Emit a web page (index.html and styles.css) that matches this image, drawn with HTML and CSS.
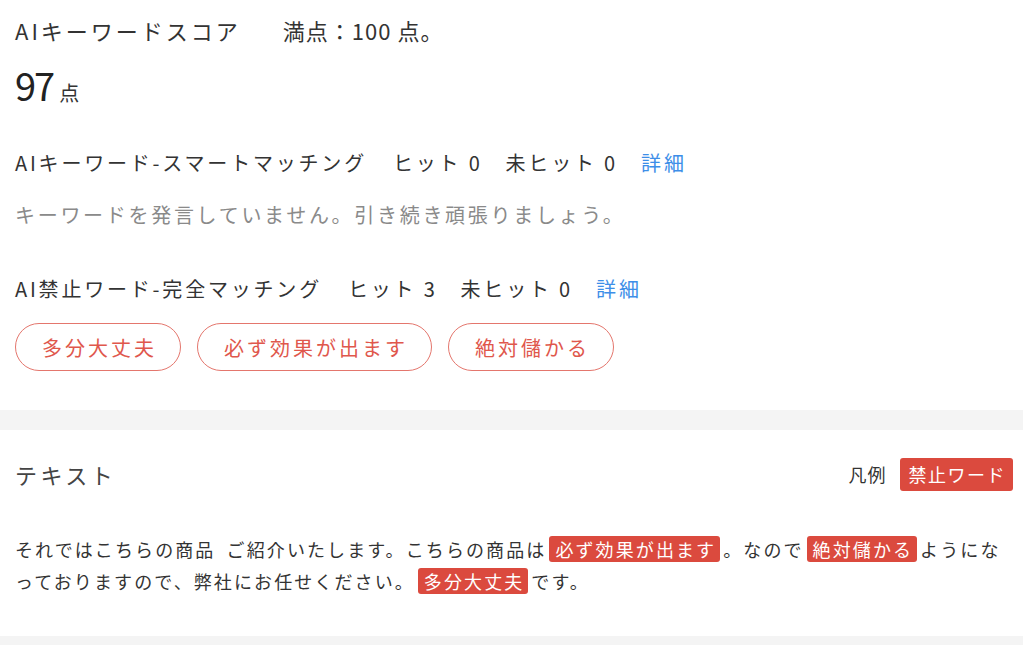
FILE: index.html
```html
<!DOCTYPE html>
<html lang="ja">
<head>
<meta charset="utf-8">
<title>AIキーワードスコア</title>
<link rel="stylesheet" href="styles.css">
</head>
<body>
<section class="card score-card">
  <div class="title-row">
    <span class="title">AIキーワードスコア</span>
    <span class="full-score">満点：100 点。</span>
  </div>
  <div class="score-value"><span class="num">97</span><span class="unit">点</span></div>

  <div class="match-row">
    <span class="match-name">AIキーワード-スマートマッチング</span>
    <span class="stat">ヒット 0</span>
    <span class="stat">未ヒット 0</span>
    <a class="detail" href="#">詳細</a>
  </div>
  <p class="muted">キーワードを発言していません。引き続き頑張りましょう。</p>

  <div class="match-row">
    <span class="match-name">AI禁止ワード-完全マッチング</span>
    <span class="stat">ヒット 3</span>
    <span class="stat">未ヒット 0</span>
    <a class="detail" href="#">詳細</a>
  </div>
  <div class="pills">
    <span class="pill">多分大丈夫</span>
    <span class="pill">必ず効果が出ます</span>
    <span class="pill">絶対儲かる</span>
  </div>
</section>
<div class="divider"></div>
<section class="card text-card">
  <div class="text-head">
    <span class="text-title">テキスト</span>
    <div class="legend"><span class="legend-label">凡例</span><span class="badge">禁止ワード</span></div>
  </div>
  <p class="body-text">それではこちらの商品&nbsp;ご紹介いたします。こちらの商品は<span class="hl">必ず効果が出ます</span>。なので<span class="hl">絶対儲かる</span>ようになっておりますので、弊社にお任せください。<span class="hl">多分大丈夫</span>です。</p>
</section>
<div class="divider"></div>
</body>
</html>
```

FILE: styles.css
```css
html, body {
  margin: 0;
  padding: 0;
  background: #ffffff;
}
body {
  font-family: "Noto Sans CJK JP", "Noto Sans", sans-serif;
  color: #333333;
  width: 1023px;
  overflow: hidden;
}
.card {
  padding: 18px 10px 39px 15px;
}
.title-row {
  display: flex;
  align-items: center;
  height: 24px;
  font-size: 22px;
  letter-spacing: 3px;
  color: #333;
}
.full-score {
  margin-left: 42px;
  letter-spacing: 1px;
}
.score-value {
  display: flex;
  align-items: baseline;
  margin-top: 23px;
  height: 40px;
  line-height: 40px;
}
.score-value .num {
  font-size: 38px;
  color: #222;
  letter-spacing: -2px;
  line-height: 40px;
}
.score-value .unit {
  font-size: 20px;
  margin-left: 6px;
}
.match-row {
  display: flex;
  align-items: center;
  height: 24px;
  font-size: 20px;
  letter-spacing: 2.8px;
  margin-top: 45px;
}
.match-name {
  margin-right: 26px;
}
.stat {
  margin-right: 23px;
}
.detail {
  color: #3d8ee8;
  text-decoration: none;
  letter-spacing: 3px;
}
.muted {
  margin: 29px 0 0;
  height: 24px;
  line-height: 24px;
  font-size: 20px;
  letter-spacing: 2.7px;
  color: #8a8a8a;
}
.muted + .match-row {
  margin-top: 49px;
}
.pills {
  display: flex;
  gap: 16px;
  margin-top: 23px;
}
.pill {
  display: inline-flex;
  align-items: center;
  justify-content: center;
  box-sizing: border-box;
  height: 48px;
  padding: 0 23px 0 26px;
  border: 1.5px solid #e4766d;
  border-radius: 24px;
  font-size: 20px;
  letter-spacing: 3px;
  color: #e0574c;
}
.divider {
  height: 20px;
  background: #f4f4f4;
}
.text-card {
  padding-top: 27px;
}
.text-head {
  display: flex;
  align-items: center;
  justify-content: space-between;
  height: 34px;
}
.text-title {
  font-size: 22px;
  letter-spacing: 3.5px;
  color: #444;
}
.legend {
  display: flex;
  align-items: center;
  gap: 13px;
  font-size: 18px;
}
.legend-label {
  color: #333;
  letter-spacing: 1px;
}
.badge {
  display: inline-flex;
  align-items: center;
  height: 33px;
  padding: 0 7px 0 9px;
  background: #db4a3e;
  color: #ffffff;
  border-radius: 3px;
  font-size: 18px;
  letter-spacing: 1.5px;
}
.body-text {
  margin: 42px 0 0;
  font-size: 18px;
  line-height: 32px;
  letter-spacing: 2.1px;
  word-spacing: 5px;
  color: #333;
}
.hl {
  background: #db4a3e;
  color: #ffffff;
  padding: 0 4px 0 6px;
  margin: 0 3px;
  border-radius: 3px;
}
```
